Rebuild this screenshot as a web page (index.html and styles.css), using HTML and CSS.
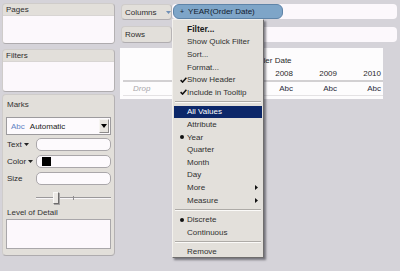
FILE: index.html
```html
<!DOCTYPE html>
<html>
<head>
<meta charset="utf-8">
<link rel="stylesheet" href="styles.css">
</head>
<body>
<div class="app">
  <aside class="side">
    <section class="card pages">
      <div class="card-h">Pages</div>
      <div class="card-b"></div>
    </section>
    <section class="card filters">
      <div class="card-h">Filters</div>
      <div class="card-b"></div>
    </section>
    <section class="card marks">
      <div class="marks-h">Marks</div>
      <div class="select">
        <span class="abc">Abc</span><span class="sel-t">Automatic</span>
        <span class="sel-btn"><svg width="6" height="4" viewBox="0 0 6 4"><path d="M0 0H6L3 4Z" fill="#000"/></svg></span>
      </div>
      <div class="prop">
        <span class="prop-l">Text<svg class="dd" width="5" height="3" viewBox="0 0 5 3"><path d="M0 0H5L2.5 3Z" fill="#222"/></svg></span>
        <span class="field"></span>
      </div>
      <div class="prop">
        <span class="prop-l">Color<svg class="dd" width="5" height="3" viewBox="0 0 5 3"><path d="M0 0H5L2.5 3Z" fill="#222"/></svg></span>
        <span class="field"><span class="swatch"></span></span>
      </div>
      <div class="prop">
        <span class="prop-l">Size</span>
        <span class="field"></span>
      </div>
      <div class="slider">
        <div class="track"></div>
        <div class="tick"></div>
        <div class="thumb"></div>
      </div>
      <div class="lod-l">Level of Detail</div>
      <div class="lod"></div>
    </section>
  </aside>
  <main class="main">
    <div class="shelf cols">
      <div class="shelf-l">Columns<svg class="tri" width="5" height="3" viewBox="0 0 5 3"><path d="M0 0H5L2.5 3Z" fill="#6f8fb6"/></svg></div>
      <div class="shelf-d">
        <div class="pill"><span class="plus">+</span>YEAR(Order Date)</div>
      </div>
    </div>
    <div class="shelf rows">
      <div class="shelf-l">Rows</div>
      <div class="shelf-d"></div>
    </div>
    <div class="view">
      <div class="c"></div><div class="c hdr">Order Date</div>
      <div class="c"></div><div class="c yr">2008</div><div class="c yr">2009</div><div class="c yr">2010</div>
      <div class="c dat drop">Drop</div><div class="c dat num">Abc</div><div class="c dat num">Abc</div><div class="c dat num">Abc</div>
    </div>
  </main>
</div>

<div class="menu">
  <div class="mi bold"><span class="ic"></span>Filter...</div>
  <div class="mi"><span class="ic"></span>Show Quick Filter</div>
  <div class="mi"><span class="ic"></span>Sort...</div>
  <div class="mi"><span class="ic"></span>Format...</div>
  <div class="mi"><span class="ic"><svg width="7" height="6" viewBox="0 0 7 6"><path d="M0.6 3.1L2.6 5.1L6.4 0.7" fill="none" stroke="#111" stroke-width="1.5"/></svg></span>Show Header</div>
  <div class="mi"><span class="ic"><svg width="7" height="6" viewBox="0 0 7 6"><path d="M0.6 3.1L2.6 5.1L6.4 0.7" fill="none" stroke="#111" stroke-width="1.5"/></svg></span>Include in Tooltip</div>
  <div class="sep"></div>
  <div class="mi hl"><span class="ic"></span>All Values</div>
  <div class="mi"><span class="ic"></span>Attribute</div>
  <div class="mi"><span class="ic"><span class="dot"></span></span>Year</div>
  <div class="mi"><span class="ic"></span>Quarter</div>
  <div class="mi"><span class="ic"></span>Month</div>
  <div class="mi"><span class="ic"></span>Day</div>
  <div class="mi"><span class="ic"></span>More<svg class="arr" width="3" height="5" viewBox="0 0 3 5"><path d="M0 0L3 2.5L0 5Z" fill="#111"/></svg></div>
  <div class="mi"><span class="ic"></span>Measure<svg class="arr" width="3" height="5" viewBox="0 0 3 5"><path d="M0 0L3 2.5L0 5Z" fill="#111"/></svg></div>
  <div class="sep"></div>
  <div class="mi"><span class="ic"><span class="dot"></span></span>Discrete</div>
  <div class="mi"><span class="ic"></span>Continuous</div>
  <div class="sep"></div>
  <div class="mi"><span class="ic"></span>Remove</div>
</div>
</body>
</html>
```

FILE: styles.css
```css
* { box-sizing: border-box; margin: 0; padding: 0; }
html, body { width: 400px; height: 271px; overflow: hidden; }
body {
  background: #d5d3d9;
  font-family: "Liberation Sans", Arial, sans-serif;
  font-size: 8px;
  color: #2a2a2a;
  position: relative;
}

.app { display: flex; padding: 3px 0 0 2px; gap: 5px; }

/* left column */
.side { width: 113px; display: flex; flex-direction: column; }
.card {
  background: #e2dfda;
  border: 1px solid #cfccca;
  border-right-color: #b4b1b3;
  border-bottom-color: #aeabae;
  border-radius: 4px;
  display: flex;
  flex-direction: column;
}
.pages { height: 41px; }
.filters { height: 43px; margin-top: 5px; }
.card-h { height: 11px; line-height: 11px; padding-left: 3px; color: #2e2e2e; }
.card-b { flex: 1; background: #fcf8fc; border-top: 1px solid #d8d5d3; border-radius: 0 0 3px 3px; }

.marks { height: 162px; margin-top: 2px; padding: 3px 3px 0; }
.marks-h { height: 13px; line-height: 13px; padding-left: 1px; color: #333; }
.select {
  margin-top: 6px;
  height: 18px;
  background: #fdfafd;
  border: 1px solid #9d9b9e;
  display: flex;
  align-items: center;
  padding-left: 4px;
}
.abc { color: #5f83c4; margin-right: 5px; }
.sel-t { color: #222; }
.sel-btn {
  margin-left: auto;
  margin-right: 1px;
  width: 10px;
  height: 14px;
  background: #e7e4df;
  border: 1px solid #f7f5f2;
  border-right-color: #8d8b8b;
  border-bottom-color: #8d8b8b;
  display: flex;
  align-items: center;
  justify-content: center;
}
.prop { display: flex; height: 13px; margin-top: 4px; }
.select + .prop { margin-top: 3px; }
.prop-l { width: 30px; padding-left: 1px; display: flex; align-items: center; color: #2a2a2a; }
.dd { margin-left: 2px; }
.field {
  flex: 1;
  background: #fdfafd;
  border: 1px solid #aaa7aa;
  border-radius: 5px;
  display: flex;
  align-items: center;
  padding-left: 5px;
}
.swatch { width: 9px; height: 9px; background: #000; }

.slider { position: relative; height: 14px; margin-top: 6px; margin-left: 30px; }
.track { position: absolute; left: 0; right: 0; top: 6px; height: 2px; border-top: 1px solid #9a989a; border-bottom: 1px solid #f8f6f8; }
.tick { position: absolute; left: 37px; top: 5px; width: 1px; height: 4px; background: #8e8c8e; }
.thumb {
  position: absolute; left: 17px; top: 1px; width: 6px; height: 12px;
  background: #ebe8e4;
  border: 1px solid #f9f8f6;
  border-right-color: #6e6c6c;
  border-bottom-color: #6e6c6c;
  box-shadow: 1px 1px 0 #a5a3a3;
}
.lod-l { height: 13px; line-height: 13px; margin-top: 1px; padding-left: 1px; color: #333; }
.lod { height: 30px; background: #fcf8fc; border: 1px solid #a9a7aa; }

/* main */
.main { width: 277px; display: flex; flex-direction: column; padding-top: 1px; }
.shelf { display: flex; margin-left: 1px; }
.cols { height: 16px; }
.rows { height: 17px; margin-top: 6px; }
.shelf-l {
  width: 51px;
  background: #e2dfda;
  border: 1px solid #cfccca;
  border-right-color: #b8b5b6;
  border-bottom-color: #b0adb0;
  border-radius: 4px;
  padding-left: 3px;
  display: flex;
  align-items: center;
  color: #2c2c2c;
}
.tri { margin-left: 9px; }
.shelf-d {
  flex: 1;
  background: #fcf8fc;
  border-radius: 4px;
  margin: 0 0 1px 0;
  display: flex;
  align-items: center;
}
.rows .shelf-d { margin: 1px 0; }
.pill {
  margin-left: 1px;
  width: 110px;
  height: 15px;
  background: #7ea5c8;
  border: 1px solid #5f84a8;
  border-radius: 6px;
  display: flex;
  align-items: center;
  padding-left: 6px;
  color: #13202e;
  white-space: nowrap;
}
.plus { font-size: 7px; margin-right: 4px; }

.view {
  margin-top: 5px;
  width: 263px;
  height: 51px;
  background: #fdfcfd;
  padding: 6px 0 3px 3px;
  display: grid;
  grid-template-columns: 128px repeat(3, 44px);
  grid-template-rows: 12px 14px 16px;
}
.c { display: flex; align-items: center; white-space: nowrap; color: #2a2a2a; }
.hdr { grid-column: span 3; padding-left: 1px; }
.yr { justify-content: flex-end; padding-right: 2px; padding-top: 1px; }
.dat { border-top: 2px solid #d2d0d2; border-bottom: 1px solid #e4e2e4; }
.num { justify-content: flex-end; padding-right: 2px; color: #2b2b3a; }
.drop { padding-left: 10px; font-style: italic; color: #a9a7aa; }

/* context menu */
.menu {
  position: absolute;
  left: 172px;
  top: 19px;
  width: 92px;
  height: 239px;
  background: #e3e0db;
  border: 1px solid #f3f1ed;
  border-right-color: #6f6d6d;
  border-bottom-color: #6f6d6d;
  box-shadow: 2px 2px 2px rgba(40, 40, 50, 0.55);
  padding-top: 3px;
}
.mi {
  height: 12.6px;
  margin: 0 1px;
  display: flex;
  align-items: center;
  color: #303030;
  white-space: nowrap;
}
.mi.bold { font-weight: bold; font-size: 8.5px; color: #1a1a1a; }
.mi.hl { background: #0c2769; color: #fff; }
.ic { width: 13px; padding-left: 6px; display: flex; align-items: center; flex: none; }
.dot { width: 4px; height: 4px; border-radius: 50%; background: #111; }
.arr { margin-left: auto; margin-right: 4px; }
.sep { height: 7px; margin: 0 2px; display: flex; flex-direction: column; justify-content: center; }
.sep::before { content: ""; display: block; border-top: 1px solid #aeaba7; border-bottom: 1px solid #fbfaf8; }
```
